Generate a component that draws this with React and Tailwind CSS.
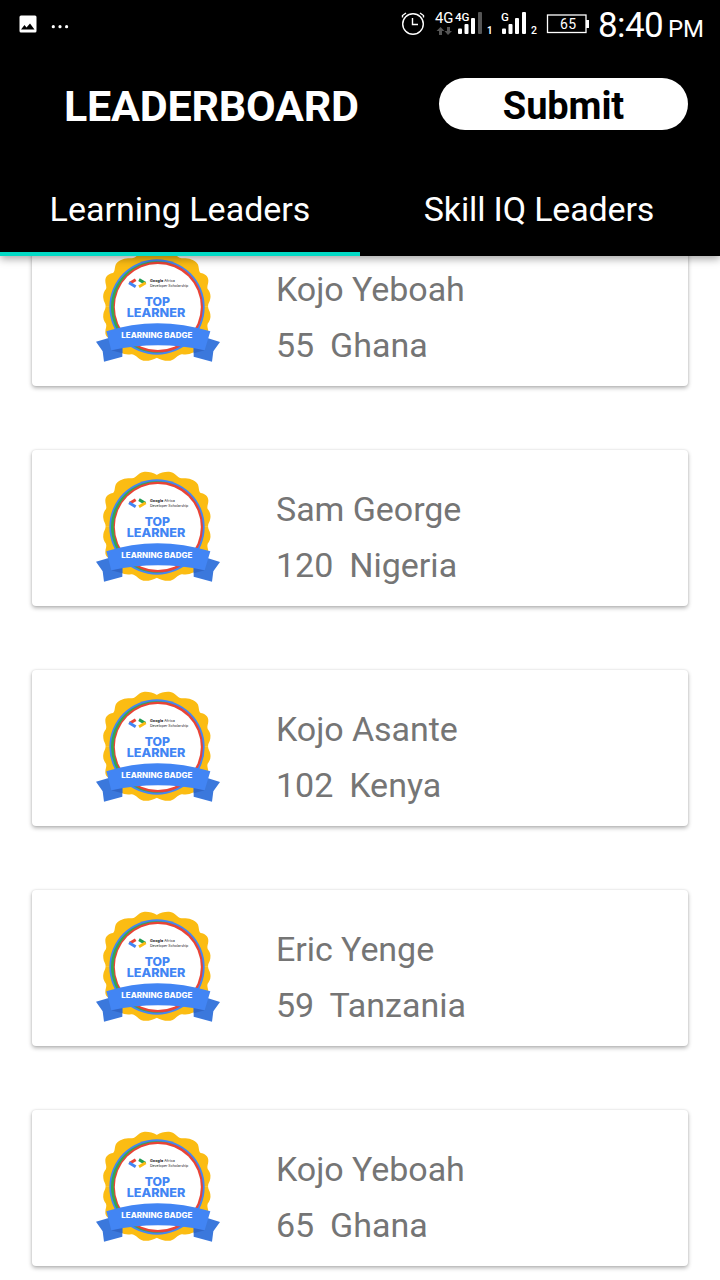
const leaders = [
  { name: "Kojo Yeboah", hours: 55, country: "Ghana" },
  { name: "Sam George", hours: 120, country: "Nigeria" },
  { name: "Kojo Asante", hours: 102, country: "Kenya" },
  { name: "Eric Yenge", hours: 59, country: "Tanzania" },
  { name: "Kojo Yeboah", hours: 65, country: "Ghana" },
];

// One quarter of the scalloped rosette; mirrored to make the full outline
const rosetteQuarter =
  "M201 33C188 26 173 22 160 24C144 27 140 41 126 43C112 42 88 44 78 60C73 70 76 81 69 87C57 89 45 97 46 111C46 120 51 127 48 135C42 142 38 151 40 163C41 174 47 178 47 187.500H201Z";
const mirrors = [
  "translate(0 0)",
  "translate(401 0) scale(-1 1)",
  "translate(0 374) scale(1 -1)",
  "translate(401 374) scale(-1 -1)",
];

function Badge() {
  return (
    <svg className="h-[124px] w-[136px] shrink-0" viewBox="0 0 408 372">
      {mirrors.map((m) => (
        <path key={m} d={rosetteQuarter} transform={m} fill="#fbbc13" />
      ))}
      <circle cx="201" cy="189" r="143" fill="#4285f4" />
      <circle cx="200" cy="189" r="137" fill="#34a853" />
      <ellipse cx="205" cy="189" rx="134" ry="136" fill="#ea4335" />
      <circle cx="203.500" cy="189" r="129" fill="#fff" />
      <g fill="none" strokeWidth="9">
        <path d="M137 107L119 118" stroke="#ea4335" />
        <path d="M117 116L137 128" stroke="#4285f4" />
        <path d="M147 107L166 118" stroke="#1e9e50" />
        <path d="M167 116L147 128" stroke="#fbbc13" />
      </g>
      <g fontFamily="Inter, sans-serif">
        <text x="180" y="114" fontSize="11" fill="#222" textLength="75" lengthAdjust="spacingAndGlyphs">
          <tspan fontWeight="700">Google</tspan> Africa
        </text>
        <text x="180" y="128" fontSize="11" fill="#222" textLength="115" lengthAdjust="spacingAndGlyphs">Developer Scholarship</text>
        <text x="164" y="186" fontSize="35" fontWeight="800" fill="#4285f4" textLength="76" lengthAdjust="spacingAndGlyphs">TOP</text>
        <text x="110" y="219" fontSize="35" fontWeight="800" fill="#4285f4" textLength="176" lengthAdjust="spacingAndGlyphs">LEARNER</text>
      </g>
      <path d="M18 293L56 282L97 312V338L42 353L38 322Z" fill="#3b78dc" />
      <path d="M390 294L352 282L311 312V338L366 353L370 322Z" fill="#3b78dc" />
      <path d="M64 319L97 328V309ZM344 319L311 328V309Z" fill="#3267c6" />
      <path d="M49 262Q200 213 361 262L344 319Q204 289 64 319Z" fill="#4285f4" />
      <text x="94" y="283" fontSize="22" fontWeight="800" fill="#fff" fontFamily="Inter, sans-serif" textLength="213" lengthAdjust="spacingAndGlyphs">LEARNING BADGE</text>
    </svg>
  );
}

function StatusBar() {
  return (
    <div className="flex h-12 items-center justify-between pr-4 pl-[18px]">
      <svg className="h-12 w-14" viewBox="18 0 56 48">
        <rect x="19.500" y="15.500" width="17" height="17" rx="1.500" fill="#fff" />
        <path d="M21 29.500L24.500 25L26.500 27.500L30 23.500L34.500 29.500Z" fill="#000" />
        <g fill="#fff">
          <circle cx="53.300" cy="26.700" r="1.600" />
          <circle cx="60" cy="26.700" r="1.600" />
          <circle cx="66.600" cy="26.700" r="1.600" />
        </g>
      </svg>
      <div className="flex h-12 items-center">
        <svg className="h-12 w-[192px] shrink-0" viewBox="400 0 192 48" fontFamily="Roboto, sans-serif" fill="#fff">
          <g fill="none" stroke="#fff" strokeWidth="1.400">
            <circle cx="413" cy="24" r="10.300" />
            <path d="M412.500 18V24.500H418" />
            <path d="M402.500 17.500V15.500L406 13M423.500 17.500V15.500L420 13" />
          </g>
          <text x="435" y="23" fontSize="14.500" textLength="18.500" lengthAdjust="spacingAndGlyphs">4G</text>
          <text x="455" y="20.500" fontSize="11.500" fontWeight="500" textLength="14.500" lengthAdjust="spacingAndGlyphs">4G</text>
          <path d="M440.500 27L444.500 31H442V35H439V31H436.500ZM448 35L444.500 31H447V27H450V31H452Z" fill="#555" />
          <rect x="458" y="28.500" width="4" height="5.500" rx="1" />
          <rect x="464.500" y="24" width="4" height="10" rx="1" />
          <rect x="471" y="18" width="4" height="16" rx="1" />
          <rect x="478" y="12" width="4" height="22" rx="1" fill="#555" />
          <text x="487" y="34" fontSize="10.500" fontWeight="700" textLength="5.500" lengthAdjust="spacingAndGlyphs">1</text>
          <text x="501" y="20.500" fontSize="11.500" fontWeight="500">G</text>
          <rect x="502" y="28.500" width="4" height="5.500" rx="1" />
          <rect x="508.500" y="24" width="4" height="10" rx="1" />
          <rect x="515" y="18" width="4" height="16" rx="1" />
          <rect x="522" y="12" width="4" height="22" rx="1" />
          <text x="531" y="34" fontSize="10.500" fontWeight="500">2</text>
          <rect x="547.500" y="15" width="38.500" height="17.500" fill="none" stroke="#fff" strokeWidth="1.300" />
          <rect x="586" y="20" width="3" height="8" />
          <text x="560" y="29" fontSize="14" textLength="16">65</text>
        </svg>
        <div className="flex w-[112px] items-baseline justify-between pt-0.5 pl-[6px] leading-none whitespace-nowrap text-white">
          <span className="text-[35px] tracking-[-0.6px]">8:40</span>
          <span className="text-[24px]">PM</span>
        </div>
      </div>
    </div>
  );
}

export default function App() {
  return (
    <div className="flex h-[1280px] w-[720px] flex-col overflow-hidden bg-white font-['Roboto',sans-serif]">
      <header className="relative z-10 flex h-64 shrink-0 flex-col bg-black text-white shadow-[0_3px_8px_rgba(0,0,0,0.35)]">
        <StatusBar />
        <div className="flex h-[120px] items-start justify-between pt-[30px] pr-8 pl-16">
          <h1 className="text-[43px] leading-[57px] font-bold tracking-[-0.2px]">LEADERBOARD</h1>
          <button className="h-[52px] w-[249px] rounded-full bg-white text-[38px] leading-[56px] font-bold tracking-[-0.1px] text-black">Submit</button>
        </div>
        <nav className="grid h-[88px] grid-cols-2 text-center text-[34px] leading-[83px]">
          <div className="border-b-4 border-[#03dac5]">Learning Leaders</div>
          <div className="pr-0.5 tracking-[-0.15px]">Skill IQ Leaders</div>
        </nav>
      </header>
      <main className="-mt-[26px] flex flex-col gap-16 px-8">
        {leaders.map((leader, i) => (
          <article key={i} className="flex h-[156px] shrink-0 items-start rounded-[4px] bg-white pt-[14px] pl-[58px] shadow-[0_2px_4px_rgba(0,0,0,0.3),0_0_2px_rgba(0,0,0,0.12)]">
            <Badge />
            <div className="pt-[17px] pl-[50px] text-[34px] leading-[56px] whitespace-pre text-[#757575]">
              <p className="tracking-[-0.05px]">{leader.name}</p>
              <p className="[word-spacing:-0.5px]">{leader.hours}{"  "}{leader.country}</p>
            </div>
          </article>
        ))}
      </main>
    </div>
  );
}
